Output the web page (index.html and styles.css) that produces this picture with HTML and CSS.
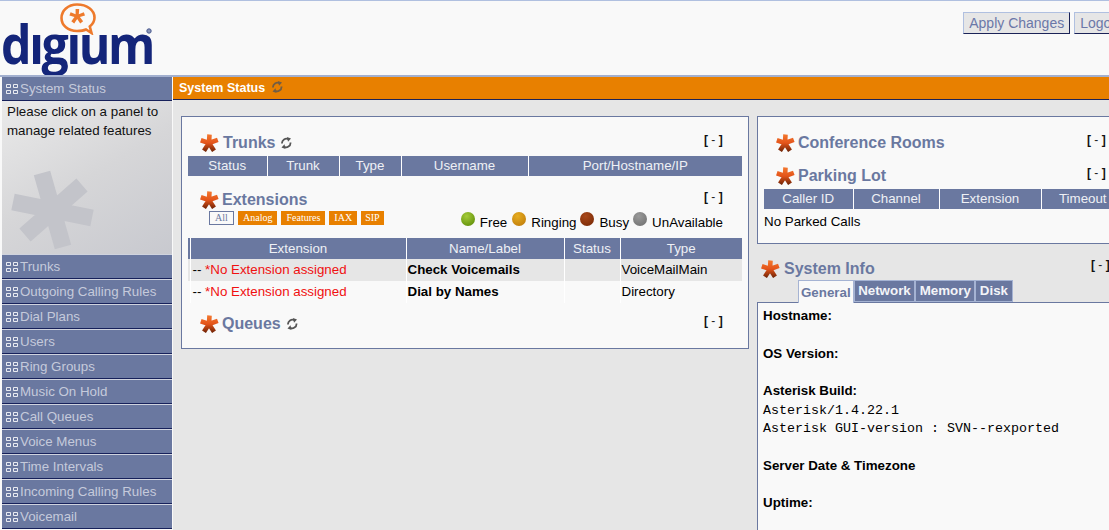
FILE: index.html
```html
<!DOCTYPE html>
<html lang="en">
<head>
<meta charset="utf-8">
<title>System Status</title>
<link rel="stylesheet" href="styles.css">
</head>
<body>
<svg class="defs" width="0" height="0">
  <defs>
    <linearGradient id="starfill" gradientUnits="userSpaceOnUse" x1="0" y1="0" x2="0" y2="18">
      <stop offset="0" stop-color="#f47a30"/>
      <stop offset="0.5" stop-color="#e4541a"/>
      <stop offset="1" stop-color="#6a2206"/>
    </linearGradient>
    <g id="star">
      <path d="M9 9 L9.5 0.5 M9 9 L0.8 6.2 M9 9 L17.8 5.8 M9 9 L4 16.8 M9 9 L14 16.8" fill="none" stroke="url(#starfill)" stroke-width="4.6"/>
    </g>
    <g id="sync">
      <path d="M2 6.5 A4.5 4.5 0 0 1 8.6 2.2" fill="none" stroke="#555" stroke-width="1.8"/>
      <path d="M7 0 L11 1.4 L8 4.8 Z" fill="#555"/>
      <path d="M10.5 5.5 A4.5 4.5 0 0 1 3.9 9.8" fill="none" stroke="#555" stroke-width="1.8"/>
      <path d="M5.5 12 L1.5 10.6 L4.5 7.2 Z" fill="#555"/>
    </g>
    <g id="grid">
      <path d="M0.5 0.5h4v3h-4zM7.5 0.5h4v3h-4zM0.5 6.5h4v3h-4zM7.5 6.5h4v3h-4z" fill="none" stroke="#fff" stroke-opacity="0.85"/>
    </g>
  </defs>
</svg>

<header class="top">
  <div class="logo">
    <svg class="logo-bubble" viewBox="0 0 36 32" width="36" height="32">
      <path d="M17 1.5 C8 1.5 1.5 7.5 1.5 15 C1.5 22.5 8 28 17 28 C20 28 24 27.5 26 26.5 L31.5 30 L29.8 23.5 C32.8 21 34.5 18 34.5 14.5 C34.5 7 27 1.5 17 1.5 Z" fill="none" stroke="#ee7a2c" stroke-width="2.6"/>
      <path d="M15.6 6h3.6l-.4 5.3 5-2 1.2 3.3-5.1 1.5 3.2 4.2-2.9 2.1-3-4.5-3 4.5-2.9-2.1 3.2-4.2-5.1-1.5 1.2-3.3 5 2z" fill="#ee7a2c"/>
    </svg>
    <span class="logo-word" aria-label="digium">dıgıum</span>
    <svg class="logo-reg" width="6" height="6"><circle cx="3" cy="3" r="2.2" fill="#8a95b8" stroke="#4a5a90"/></svg>
  </div>
  <div class="top-actions">
    <button class="top-btn">Apply Changes</button>
    <button class="top-btn">Logout</button>
  </div>
</header>

<div class="page">
  <nav class="side">
    <div class="side-item side-current"><svg class="grid-ico" width="12" height="10"><use href="#grid"/></svg>System Status</div>
    <div class="side-panel">
      <svg class="side-star" viewBox="0 0 100 105" width="100" height="105">
        <path d="M40 23 L61 97 M80 35 L23 85 M11 52 L90 68" fill="none" stroke="#c3c4ca" stroke-width="17"/>
      </svg>
      <p class="side-text">Please click on a panel to manage related features</p>
    </div>
    <div class="side-item"><svg class="grid-ico" width="12" height="10"><use href="#grid"/></svg>Trunks</div>
    <div class="side-item"><svg class="grid-ico" width="12" height="10"><use href="#grid"/></svg>Outgoing Calling Rules</div>
    <div class="side-item"><svg class="grid-ico" width="12" height="10"><use href="#grid"/></svg>Dial Plans</div>
    <div class="side-item"><svg class="grid-ico" width="12" height="10"><use href="#grid"/></svg>Users</div>
    <div class="side-item"><svg class="grid-ico" width="12" height="10"><use href="#grid"/></svg>Ring Groups</div>
    <div class="side-item"><svg class="grid-ico" width="12" height="10"><use href="#grid"/></svg>Music On Hold</div>
    <div class="side-item"><svg class="grid-ico" width="12" height="10"><use href="#grid"/></svg>Call Queues</div>
    <div class="side-item"><svg class="grid-ico" width="12" height="10"><use href="#grid"/></svg>Voice Menus</div>
    <div class="side-item"><svg class="grid-ico" width="12" height="10"><use href="#grid"/></svg>Time Intervals</div>
    <div class="side-item"><svg class="grid-ico" width="12" height="10"><use href="#grid"/></svg>Incoming Calling Rules</div>
    <div class="side-item"><svg class="grid-ico" width="12" height="10"><use href="#grid"/></svg>Voicemail</div>
  </nav>

  <main class="main">
    <div class="title-bar">System Status <svg class="sync-title" width="12" height="12"><use href="#sync"/></svg></div>
    <div class="columns">
      <section class="card card-left">
        <div class="head head-trunks">
          <svg class="star" width="19" height="18"><use href="#star"/></svg>
          <h2>Trunks</h2>
          <svg class="sync" width="12" height="12"><use href="#sync"/></svg>
          <span class="toggle"><b>[</b> - <b>]</b></span>
        </div>
        <table class="grid grid-trunks">
          <thead><tr><th class="c-status">Status</th><th class="c-trunk">Trunk</th><th class="c-type">Type</th><th class="c-user">Username</th><th>Port/Hostname/IP</th></tr></thead>
        </table>

        <div class="head head-ext">
          <svg class="star" width="19" height="18"><use href="#star"/></svg>
          <h2>Extensions</h2>
          <span class="toggle"><b>[</b> - <b>]</b></span>
        </div>
        <div class="filter-row">
          <div class="filters">
            <span class="filter filter-on">All</span>
            <span class="filter">Analog</span>
            <span class="filter">Features</span>
            <span class="filter">IAX</span>
            <span class="filter filter-sip">SIP</span>
          </div>
          <div class="legend">
            <i class="ball ball-free"></i><span>Free</span>
            <i class="ball ball-ring"></i><span class="tight">Ringing</span>
            <i class="ball ball-busy"></i><span class="tight">Busy</span>
            <i class="ball ball-off"></i><span>UnAvailable</span>
          </div>
        </div>
        <table class="grid grid-ext">
          <thead><tr><th class="c-flag"></th><th class="c-ext">Extension</th><th class="c-name">Name/Label</th><th class="c-st">Status</th><th>Type</th></tr></thead>
          <tbody>
            <tr class="odd"><td></td><td class="ext-cell"><span class="dash">--</span> <span class="warn">*No Extension assigned</span></td><td class="strong">Check Voicemails</td><td></td><td>VoiceMailMain</td></tr>
            <tr><td></td><td class="ext-cell"><span class="dash">--</span> <span class="warn">*No Extension assigned</span></td><td class="strong">Dial by Names</td><td></td><td>Directory</td></tr>
          </tbody>
        </table>

        <div class="head head-queues">
          <svg class="star" width="19" height="18"><use href="#star"/></svg>
          <h2>Queues</h2>
          <svg class="sync" width="12" height="12"><use href="#sync"/></svg>
          <span class="toggle"><b>[</b> - <b>]</b></span>
        </div>
      </section>

      <div class="right">
        <section class="card card-right">
          <div class="head head-conf">
            <svg class="star" width="19" height="18"><use href="#star"/></svg>
            <h2>Conference Rooms</h2>
            <span class="toggle"><b>[</b> - <b>]</b></span>
          </div>
          <div class="head head-park">
            <svg class="star" width="19" height="18"><use href="#star"/></svg>
            <h2>Parking Lot</h2>
            <span class="toggle"><b>[</b> - <b>]</b></span>
          </div>
          <table class="grid grid-park">
            <thead><tr><th class="c-caller">Caller ID</th><th class="c-chan">Channel</th><th class="c-pext">Extension</th><th>Timeout</th></tr></thead>
          </table>
          <p class="no-calls">No Parked Calls</p>
        </section>

        <section class="info">
          <div class="head head-info">
            <svg class="star" width="19" height="18"><use href="#star"/></svg>
            <h2>System Info</h2>
            <span class="toggle"><b>[</b> - <b>]</b></span>
          </div>
          <div class="tabs">
            <span class="tab tab-on">General</span>
            <span class="tab">Network</span>
            <span class="tab">Memory</span>
            <span class="tab">Disk</span>
          </div>
          <div class="tab-body">
            <b>Hostname:</b><br><br>
            <b>OS Version:</b><br><br>
            <b>Asterisk Build:</b><br>
            <code>Asterisk/1.4.22.1</code><br>
            <code>Asterisk GUI-version : SVN--rexported</code><br><br>
            <b>Server Date &amp; Timezone</b><br><br>
            <b>Uptime:</b>
          </div>
        </section>
      </div>
    </div>
  </main>
</div>
</body>
</html>
```

FILE: styles.css
```css
* { box-sizing: border-box; }
html, body { margin: 0; height: 530px; overflow: hidden; }
body {
  width: 1109px;
  background: #f9f9f9;
  font: 13.33px "Liberation Sans", Arial, sans-serif;
  color: #000;
}
.defs { position: absolute; }

.top {
  height: 77px;
  border-top: 1px solid #b0c0e0;
  border-bottom: 2px solid #a3b0cf;
  display: flex;
  justify-content: space-between;
  width: 1109px;
  position: relative;
  overflow: hidden;
}
.logo { position: relative; width: 170px; }
.logo-bubble { position: absolute; left: 60px; top: 2px; }
.logo-word {
  position: absolute;
  left: 1px;
  top: 13px;
  font: bold 53px/60px "Open Sans", sans-serif;
  letter-spacing: -2.6px;
  color: #14257a;
  transform: scaleX(0.91);
  transform-origin: left center;
}
.logo-reg { position: absolute; left: 146px; top: 27px; }

.top-actions { display: flex; gap: 4px; padding-top: 11px; margin-right: -20px; align-items: flex-start; }
.top-btn {
  height: 22px;
  padding: 0 5px;
  background: #e6e6e6;
  border: 1px solid;
  border-color: #b0c0e0 #1b2358 #1b2358 #b0c0e0;
  color: #6b78a8;
  font: 14px "Liberation Sans", Arial, sans-serif;
}

.page { display: flex; height: 453px; }

.side { width: 172px; padding-left: 2px; flex: none; }
.side-item {
  height: 25px;
  background: #6a78a0;
  border-bottom: 1px solid #16205a;
  color: #c5cadb;
  padding: 0 0 0 4px;
  display: flex;
  align-items: center;
  border-top: 1px solid #cfd3de;
  white-space: nowrap;
}
.side-current { height: 24px; border-top: 0; }
.grid-ico { margin-right: 2px; flex: none; }
.side-panel {
  position: relative;
  height: 153px;
  overflow: hidden;
  background: linear-gradient(150deg, #eaeaea 0%, #d6d6d8 50%, #c8c9cf 100%);
}
.side-star { position: absolute; left: 0; top: 49px; }
.side-text { position: relative; margin: 0; padding: 1px 5px; line-height: 19px; color: #111; }

.main { flex: 1; margin-left: 1px; background: #e6e6e6; min-width: 0; }
.title-bar {
  height: 23px;
  background: #e88000;
  border-bottom: 1px solid #1b2358;
  color: #fff;
  font-weight: bold;
  padding-left: 6px;
  line-height: 21px;
  display: flex;
  align-items: center;
  gap: 6px;
  font-size: 12.5px;
}
.sync-title { margin-top: -3px; opacity: .8; }

.columns { display: flex; gap: 8px; padding: 16px 0 0 8px; width: 1000px; align-items: flex-start; }

.card { background: #f9f9f9; border: 1px solid #6a78a0; }
.card-left { width: 568px; height: 233px; padding: 0 6px; flex: none; }
.right { width: 400px; flex: none; }
.card-right { height: 128px; padding: 0 6px; }

.head { display: flex; align-items: center; position: relative; height: 20px; }
.head h2 { margin: 0; font-size: 16px; line-height: 20px; color: #6a78a0; font-weight: bold; }
.star { margin-left: 12px; margin-right: 3px; flex: none; }
.sync { margin-left: 5px; }
.toggle { position: absolute; font-size: 12px; top: 0; white-space: pre; color: #222; }
.toggle b { color: #111; }

.head-trunks { margin: 16px 0 3px; }
.head-trunks .star { margin-right: 4px; }
.head-ext { margin-top: 14px; }
.head-queues { margin-top: 11px; }
.card-left .toggle { left: 516px; }

.grid { border-collapse: collapse; table-layout: fixed; width: 554px; }
.grid th {
  background: #6a78a0;
  color: #eef0f5;
  font-weight: normal;
  height: 20px;
  padding: 0;
  line-height: 20px;
  border-left: 1px solid #fff;
}
.grid th:first-child { border-left: 0; }
.c-status { width: 79px; }
.c-trunk { width: 72px; }
.c-type { width: 62px; }
.c-user { width: 127px; }

.filter-row { display: flex; justify-content: space-between; align-items: flex-start; height: 28px; padding-left: 21px; width: 535px; }
.filters { display: flex; gap: 4px; margin-top: 1px; }
.filter {
  height: 14px;
  padding: 0 5px;
  background: #e88000;
  color: #fff;
  font: 10px/14px "Liberation Serif", serif;
}
.filter-sip { padding: 0 4px; }
.filter-on { background: #f9f9f9; color: #6a78a0; border: 1px solid #6a78a0; line-height: 12px; padding: 0 5px; width: 25px; }
.legend { display: flex; align-items: flex-start; line-height: 17px; margin-top: 3px; }
.legend span { margin-right: 5px; margin-top: 1px; }
.legend span.tight { margin-right: 4px; }
.legend span:last-child { margin-right: 0; }
.ball { width: 14px; height: 14px; border-radius: 50%; margin-right: 5px; margin-top: -1px; flex: none; }
.ball-free { background: radial-gradient(circle at 40% 30%, #a5cc3a, #6d9a12 70%, #5a8010); }
.ball-ring { background: radial-gradient(circle at 40% 30%, #e6ad20, #c8860f 70%, #a86c10); }
.ball-busy { background: radial-gradient(circle at 40% 30%, #a8481a, #84300a 70%, #6e2408); }
.ball-off { background: radial-gradient(circle at 40% 30%, #9a9a9a, #7a7a7a 70%, #6a6a6a); }

.grid-ext td { height: 22px; padding: 0 1px; border-left: 1px solid #fff; line-height: 20px; white-space: nowrap; }
.grid-ext td:first-child { border-left: 0; }
.grid-ext td.ext-cell { padding-left: 2px; }
.grid-ext th { height: 21px; }
.grid-ext tr.odd td { background: #e6e6e6; }
.c-flag { width: 2px; }
.c-ext { width: 216px; }
.c-name { width: 158px; }
.c-st { width: 56px; }
.warn { color: #f01010; }
.strong { font-weight: bold; }

.head-conf { margin-top: 16px; }
.head-park { margin: 13px 0 3px; }
.card-right .toggle { left: 323px; }
.grid-park { width: 360px; }
.c-caller { width: 89px; }
.c-chan { width: 86px; }
.c-pext { width: 102px; }
.no-calls { margin: 3px 0 0; line-height: 19px; }

.info { margin-top: 15px; }
.head-info .star { margin-left: 4px; margin-right: 4px; }
.head-info .toggle { left: 334px; top: -1px; }
.tabs { display: flex; padding-left: 41px; height: 22px; margin-top: 1px; }
.tab {
  background: #6a78a0;
  color: #f3f4f8;
  font-weight: bold;
  border: 1px solid #a5b3d3;
  line-height: 20px;
  padding: 0 3.5px;
}
.tab-on {
  background: #f9f9f9;
  color: #6a78a0;
  border-bottom: 0;
  height: 23px;
  line-height: 23px;
  padding: 0 2px;
  position: relative;
  z-index: 1;
}
.tab-body {
  background: #f9f9f9;
  border: 1px solid #6a78a0;
  height: 240px;
  padding: 4.4px 4px 0 5px;
  line-height: 18.67px;
}
.tab-body code { font: 13.33px "Liberation Mono", monospace; }
```
